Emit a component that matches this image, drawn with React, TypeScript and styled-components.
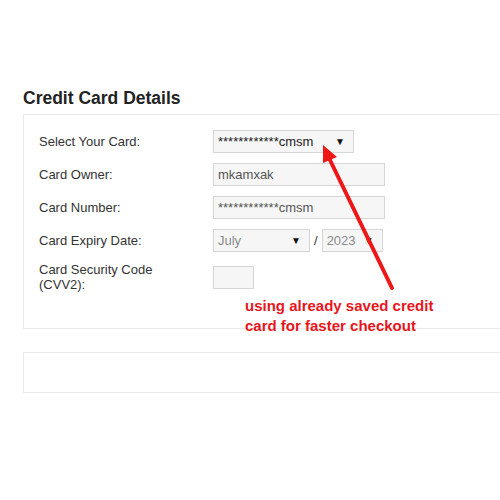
import React from "react";
import styled, { createGlobalStyle } from "styled-components";

const Global = createGlobalStyle`
  html, body { margin: 0; padding: 0; background: #fff; overflow: hidden; }
  body { font-family: "Liberation Sans", Arial, sans-serif; color: #333; }
`;

const Page = styled.div`
  position: relative;
  width: 500px;
  height: 500px;
  padding: 87px 0 0 23px;
  box-sizing: border-box;
  overflow: hidden;
`;

const Title = styled.h2`
  margin: 0 0 5px 0;
  font-size: 17.5px;
  line-height: 22px;
  font-weight: bold;
  color: #222;
`;

const Panel = styled.div<{ $h?: number }>`
  width: 520px;
  box-sizing: border-box;
  border: 1px solid #e9e9e9;
  padding: 15px 0 36px 15px;
  display: flex;
  flex-direction: column;
  gap: 10px;
  ${(p) => (p.$h ? `height: ${p.$h}px; padding: 0;` : "")}
`;

const Spacer = styled.div`
  height: 23px;
`;

const Row = styled.div`
  display: flex;
  align-items: center;
  min-height: 23px;
`;

const Label = styled.div`
  width: 174px;
  font-size: 13px;
  line-height: 15px;
  color: #333;
`;

const Field = styled.div<{ $w: number; $muted?: boolean; $dark?: boolean }>`
  width: ${(p) => p.$w}px;
  height: 23px;
  box-sizing: border-box;
  border: 1px solid #d6d6d6;
  background: #f6f6f6;
  display: flex;
  align-items: center;
  justify-content: space-between;
  padding: 0 8px 0 4px;
  font-size: 13px;
  color: ${(p) => (p.$dark ? "#222" : p.$muted ? "#8a8a8a" : "#555")};
`;

const Caret = styled.span`
  font-size: 10px;
  color: #111;
`;

const Slash = styled.span`
  font-size: 13px;
  color: #333;
  margin: 0 4px;
`;

const Note = styled.div`
  position: absolute;
  left: 245px;
  top: 296px;
  font-size: 15px;
  line-height: 20px;
  font-weight: bold;
  color: #e8161c;
`;

const Arrow = styled.svg`
  position: absolute;
  left: 0;
  top: 0;
  pointer-events: none;
`;

export default function App() {
  return (
    <>
      <Global />
      <Page>
        <Title>Credit Card Details</Title>
        <Panel>
          <Row>
            <Label>Select Your Card:</Label>
            <Field $w={141} $dark>
              <span>************cmsm</span>
              <Caret>▼</Caret>
            </Field>
          </Row>
          <Row>
            <Label>Card Owner:</Label>
            <Field $w={172}>mkamxak</Field>
          </Row>
          <Row>
            <Label>Card Number:</Label>
            <Field $w={172}>************cmsm</Field>
          </Row>
          <Row>
            <Label>Card Expiry Date:</Label>
            <Field $w={97} $muted>
              <span>July</span>
              <Caret>▼</Caret>
            </Field>
            <Slash>/</Slash>
            <Field $w={61} $muted>
              <span>2023</span>
              <Caret>▼</Caret>
            </Field>
          </Row>
          <Row>
            <Label>
              Card Security Code
              <br />
              (CVV2):
            </Label>
            <Field $w={41} />
          </Row>
        </Panel>
        <Spacer />
        <Panel $h={41} />
        <Note>
          using already saved credit
          <br />
          card for faster checkout
        </Note>
        <Arrow width="500" height="500" viewBox="0 0 500 500">
          <line x1="392" y1="288" x2="329" y2="158" stroke="#ee1616" strokeWidth="4" strokeLinecap="round" />
          <polygon points="323,145 337,157 323,163" fill="#ee1616" />
        </Arrow>
      </Page>
    </>
  );
}
